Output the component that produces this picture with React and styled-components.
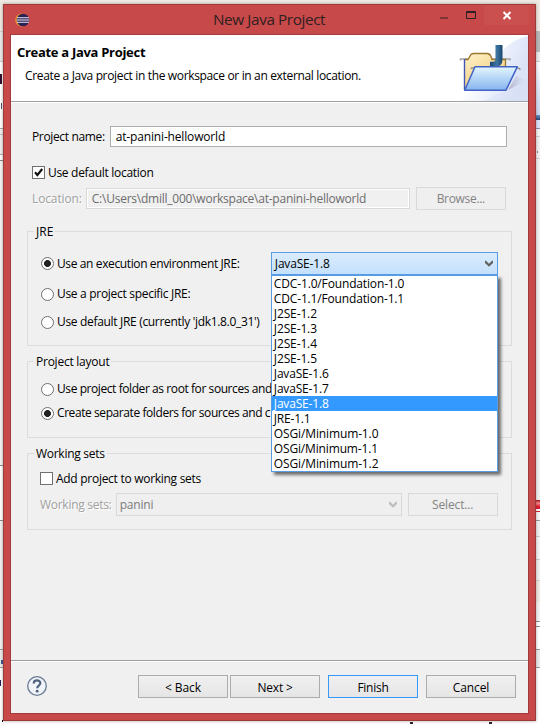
import React from 'react';
import styled, { createGlobalStyle, css } from 'styled-components';

const Global = createGlobalStyle`
  *, *::before, *::after { box-sizing: border-box; }
  body { margin: 0; overflow: hidden; }
`;

const Desktop = styled.div`
  position: relative;
  width: 540px;
  height: 724px;
  overflow: hidden;
  display: flex;
  background: #f5f4f4;
  font: 12px/16px 'Open Sans', 'Noto Sans', sans-serif;
  color: #000;
`;

/* Windows that lie behind the dialog; only their edges stay visible */
const Behind = styled.div`
  position: absolute;
  inset: 0;
  display: flex;
  justify-content: space-between;
`;
const Strip = styled.div`
  width: 270px;
  display: flex;
  flex-direction: column;
`;
const Segment = styled.div`
  flex: none;
  height: ${(p) => p.$h}px;
  background: ${(p) => p.$bg};
  border-top: ${(p) => (p.$line ? `1px solid ${p.$line}` : '0')};
  overflow: hidden;
`;
const Scrap = styled.div`
  width: ${(p) => p.$w || 3}px;
  height: ${(p) => p.$h}px;
  margin: ${(p) => p.$m};
  background: ${(p) => p.$c};
`;

const Window = styled.section`
  position: relative;
  width: 533px;
  height: 717px;
  margin: 4px 0 0 3px;
  padding: 0 6px 6px;
  background: #c84949;
  border: 1px solid #9e3a3a;
  box-shadow: 0 0 3px rgba(70, 50, 50, 0.45);
`;
const TitleBar = styled.header`
  height: 29px;
  display: flex;
  align-items: flex-start;
`;
const EclipseIcon = styled.svg`
  margin: 8px 0 0 5px;
`;
const Title = styled.h1`
  flex: 1;
  margin: 3px 0 0 183px;
  font-size: 15.3px;
  font-weight: 400;
  line-height: 23px;
  letter-spacing: -0.4px;
  color: #2e2022;
  white-space: nowrap;
`;
const Caption = styled.div`
  display: flex;
  height: 20px;
`;
const CaptionButton = styled.div`
  width: ${(p) => p.$w}px;
  background: ${(p) => p.$bg || 'transparent'};
  svg { display: block; }
`;

const Client = styled.div`
  width: 519px;
  height: 680px;
  border: 1px solid #a33a3c;
  background: #f0f0f0;
  display: flex;
  flex-direction: column;
`;
const Banner = styled.div`
  flex: none;
  height: 67px;
  display: flex;
  justify-content: space-between;
  background: #fff;
  border-bottom: 1px solid #a0a0a0;
`;
const BannerText = styled.div`
  padding: 8px 0 0 6px;
`;
const Heading = styled.h2`
  margin: 0;
  font-size: 13px;
  line-height: 18px;
  letter-spacing: -0.3px;
`;
const Text = styled.span`
  display: block;
  white-space: nowrap;
  letter-spacing: ${(p) => p.$ls || 0}px;
  ${(p) => p.$disabled && css`
    color: #a0a0a0;
    text-shadow: 1px 1px 0 #fff;
  `}
`;
const Description = styled(Text)`
  margin: 7px 0 0 8px;
`;

const Body = styled.main`
  flex: 1;
  display: flex;
  flex-direction: column;
  border-top: 1px solid #fff;
  padding: 23px 16px 0;
`;
const Row = styled.div`
  display: flex;
  align-items: center;
  flex: none;
  height: ${(p) => p.$h}px;
  margin-top: ${(p) => p.$mt || 0}px;
  padding-left: ${(p) => p.$pl || 0}px;
`;
const Field = styled.div`
  flex: none;
  width: ${(p) => p.$w}px;
  height: 21px;
  margin-left: ${(p) => p.$ml}px;
  padding: 2px 5px 0;
  border: 1px solid ${(p) => (p.$disabled ? '#d9d9d9' : '#abadb3')};
  background: ${(p) => (p.$disabled ? '#f0f0f0' : '#fff')};
  box-shadow: ${(p) => (p.$disabled ? 'inset 0 0 0 1px #fff' : 'none')};
  color: ${(p) => (p.$disabled ? '#6d6d6d' : '#000')};
`;
const Button = styled.button`
  flex: none;
  width: 90px;
  height: 23px;
  margin: 0 0 0 ${(p) => p.$ml || 0}px;
  padding: 2px 0 0;
  display: flex;
  align-items: center;
  justify-content: center;
  font: inherit;
  color: #000;
  border: 1px solid #acacac;
  background: linear-gradient(#f0f0f0, #e5e5e5);
  ${(p) => p.$primary && css`border-color: #3399ff;`}
  ${(p) => p.$disabled && css`
    padding-top: 0;
    color: #838383;
    border-color: #d9d9d9;
    background: #efefef;
  `}
`;
const Check = styled.span`
  flex: none;
  width: 13px;
  height: 13px;
  margin-right: 3px;
  border: 1px solid #707070;
  background: #fff;
  svg { display: block; }
`;
const Radio = styled.span`
  flex: none;
  width: 13px;
  height: 13px;
  margin-right: 3px;
  border: 1px solid #707070;
  border-radius: 50%;
  background: ${(p) => (p.$on ? 'radial-gradient(circle, #212121 3.1px, #fff 3.8px)' : '#fff')};
`;

const Group = styled.fieldset`
  flex: none;
  position: relative;
  width: 485px;
  height: ${(p) => p.$h}px;
  margin: ${(p) => p.$mt}px 0 0;
  padding: 0;
  border: 1px solid #dcdcdc;
  min-width: 0;
  display: flex;
  flex-direction: column;
`;
const Legend = styled.div`
  flex: none;
  align-self: flex-start;
  height: 16px;
  margin: -8px 0 -1px 6px;
  padding: 0 2px;
  background: #f0f0f0;
`;

const ComboBox = styled.div`
  flex: none;
  position: relative;
  width: ${(p) => p.$w}px;
  height: 23px;
  margin-left: ${(p) => p.$ml}px;
  padding: 0 4px 0 3px;
  display: flex;
  align-items: center;
  justify-content: space-between;
  border: 1px solid ${(p) => (p.$disabled ? '#d9d9d9' : '#569de5')};
  background: ${(p) => (p.$disabled ? '#efefef' : 'linear-gradient(#daecfc, #c4e0fc)')};
  color: ${(p) => (p.$disabled ? '#7b7b7b' : '#000')};
`;
const Menu = styled.ul`
  position: absolute;
  z-index: 2;
  top: 22px;
  left: -1px;
  width: 227px;
  margin: 0;
  padding: 0;
  list-style: none;
  border: 1px solid #569de5;
  background: #fff;
  box-shadow: 3px 3px 3px rgba(0, 0, 0, 0.55);
`;
const Option = styled.li`
  height: 15px;
  padding-left: 2px;
  line-height: 15px;
  background: ${(p) => (p.$active ? '#3399ff' : 'transparent')};
  color: ${(p) => (p.$active ? '#fff' : '#000')};
`;

const Footer = styled.footer`
  flex: none;
  height: 53px;
  display: flex;
  align-items: flex-start;
  padding: 14px 12px 0 15px;
  border-top: 1px solid #a0a0a0;
  box-shadow: inset 0 1px 0 #fff;
`;
const Help = styled.svg`
  flex: none;
  margin-right: 90px;
`;

const runtimes = [
  ['CDC-1.0/Foundation-1.0', -0.15], ['CDC-1.1/Foundation-1.1', -0.16],
  ['J2SE-1.2', -0.13], ['J2SE-1.3', -0.13], ['J2SE-1.4', -0.13], ['J2SE-1.5', -0.13],
  ['JavaSE-1.6', -0.18], ['JavaSE-1.7', -0.18], ['JavaSE-1.8', -0.18], ['JRE-1.1', -0.2],
  ['OSGi/Minimum-1.0', -0.13], ['OSGi/Minimum-1.1', -0.16], ['OSGi/Minimum-1.2', -0.13],
];

const Chevron = ({ color }) => (
  <svg width="8" height="7" viewBox="0 0 8 7">
    <path d="M0 0.8 V3 L4 6.8 L8 3 V0.8 H7 L4 3.7 L1 0.8 Z" fill={color} />
  </svg>
);

const Choice = ({ on, ls, children, ...row }) => (
  <Row $h={16} $pl={13} {...row}>
    <Radio $on={on} />
    <Text $ls={ls}>{children}</Text>
  </Row>
);

const FolderArt = () => (
  <svg width="78" height="66" viewBox="450 35 78 66">
    <defs>
      <linearGradient id="sky" x1="0" y1="0" x2="1" y2="0.3">
        <stop offset="0.3" stopColor="#fff" />
        <stop offset="1" stopColor="#dbe3f7" />
      </linearGradient>
      <linearGradient id="manila" x1="0" y1="0" x2="0.6" y2="1">
        <stop offset="0" stopColor="#fff3cb" />
        <stop offset="1" stopColor="#efc873" />
      </linearGradient>
      <linearGradient id="flap" x1="0" y1="0" x2="0" y2="1">
        <stop offset="0" stopColor="#e3f6ff" />
        <stop offset="1" stopColor="#86b4ee" />
      </linearGradient>
      <linearGradient id="jay" x1="0" y1="0" x2="1" y2="0">
        <stop offset="0" stopColor="#19466f" />
        <stop offset="0.55" stopColor="#3f77a2" />
        <stop offset="1" stopColor="#17446d" />
      </linearGradient>
      <linearGradient id="shade" x1="0" y1="0" x2="1" y2="0">
        <stop offset="0" stopColor="#9a98b4" stopOpacity="0.7" />
        <stop offset="1" stopColor="#c3c5dd" stopOpacity="0" />
      </linearGradient>
    </defs>
    <path d="M528 36 C512 40 504 47 499 57 L488 82 L456 101 H528 Z" fill="url(#sky)" />
    <path d="M528 78 C514 88 502 91 484 101 H528 Z" fill="#cfd9f5" opacity="0.3" />
    <path d="M508 90 L516 76 L526 80 Q516 86 508 90 Z" fill="url(#shade)" />
    <path d="M460.5 60.5 V59 H510 V60.5" fill="none" stroke="#a5a5a5" strokeWidth="1.6" />
    <path d="M465 90 V60 L468 59 L471 54 Q472 53 474 53 H487 Q490 53 491 56 L492 59 H505 V70 L500 90 Z" fill="url(#manila)" />
    <path d="M465 59.5 H468 L471 54.5 Q472 53.5 474 53.5 H487 Q490 53.5 491 56.5 L492 59.5 H505.5 V66" fill="none" stroke="#9a792f" strokeWidth="1.3" />
    <path d="M464.5 90 V59" fill="none" stroke="#4257b8" strokeWidth="1.4" />
    <path d="M495.5 45 H502.5 V59 Q502.5 67 495 67 H490 V61.8 H493 Q495.5 61.8 495.5 59 Z" fill="url(#jay)" />
    <path d="M471 69 Q471 67.8 474 67.8 M515 67.8 Q520 67.5 520 70" fill="none" stroke="#999" strokeWidth="1.7" />
    <path d="M464.7 90.2 L475 66.8 H517.3 L506 90.2 Z" fill="url(#flap)" stroke="#4263c4" strokeWidth="1.5" strokeLinejoin="round" />
  </svg>
);

const Scene = () => (
  <Behind>
    <Strip>
      <Segment $h={31} $bg="#eee9e2" />
      <Segment $h={30} $bg="#e9e9ea" $line="#cfcfcf" />
      <Segment $h={67} $bg="#fff" $line="#ccc">
        <Scrap $h={10} $w={2} $m="12px 0 0 0" $c="#30102e" />
        <Scrap $h={6} $w={1} $m="19px 0 0 1px" $c="#4b4b66" />
      </Segment>
      <Segment $h={6} $bg="#f0f0f0" $line="#aaa" />
      <Segment $h={20} $bg="#f0f0f0" $line="#c0c0c0" />
      <Segment $h={6} $bg="#fff" $line="#aaa" />
      <Segment $h={305} $bg="#f4f4f4" $line="#888" />
      <Segment $h={55} $bg="#fff" $line="#8d8d8d" />
      <Segment $h={129} $bg="#f1f1f1" $line="#8d8d8d" />
      <Segment $h={18} $bg="#ececec" $line="#999">
        <Scrap $h={4} $w={2} $m="10px 0 0 1px" $c="#315a8c" />
      </Segment>
      <Segment $h={57} $bg="#fff" $line="#999">
        <Scrap $h={6} $w={1} $m="12px 0 0 0" $c="#22185c" />
        <Scrap $h={2} $w={1} $m="34px 0 0 2px" $c="#000" />
      </Segment>
    </Strip>
    <Strip>
      <Segment $h={31} $bg="#eee9e2" />
      <Segment $h={21} $bg="#b9b9b9" />
      <Segment $h={9} $bg="#ececec" />
      <Segment $h={54} $bg="linear-gradient(#fff, #e9eefa 35%, #c9d7ef)" $line="#ccc" />
      <Segment $h={5} $bg="linear-gradient(#6d94c0, #1f4478)" />
      <Segment $h={8} $bg="#dbe3f8" />
      <Segment $h={8} $bg="#f4f4f4" $line="#8f8fa8" />
      <Segment $h={22} $bg="#f0f0f0" $line="#d0d0d0">
        <Scrap $h={2} $w={1} $m="14px 0 0 267px" $c="#987" />
      </Segment>
      <Segment $h={342} $bg="#f2f2f2" $line="#d0d0d0" />
      <Segment $h={11} $bg="linear-gradient(#d2434a, #f58287 25%, #e31b2c 55%, #dc1830 80%, #fff 85%)" $line="#a22" />
      <Segment $h={9} $bg="#f7f7f7" $line="#c23" />
      <Segment $h={16} $bg="#f0f0f0" $line="#999" />
      <Segment $h={23} $bg="#f4f4f4" $line="#ccc" />
      <Segment $h={21} $bg="#f0f0f0" $line="#ccc" />
      <Segment $h={22} $bg="#eee9e2" $line="#d0d0d0" />
      <Segment $h={19} $bg="#f3f3f3" />
      <Segment $h={5} $bg="#fff" $line="#8a8a8a" />
      <Segment $h={23} $bg="#fff" $line="#8a8a8a" />
      <Segment $h={18} $bg="#ececec" $line="#999" />
      <Segment $h={57} $bg="#fff" $line="#999">
        <Scrap $h={2} $w={3} $m="54px 0 0 140px" $c="#222" />
        <Scrap $h={2} $w={3} $m="-2px 0 0 219px" $c="#222" />
      </Segment>
    </Strip>
  </Behind>
);

export default function App() {
  return (
    <Desktop>
      <Global />
      <Scene />
      <Window>
        <TitleBar>
          <EclipseIcon width="15" height="14" viewBox="0 0 15 14">
            <circle cx="6.8" cy="7" r="6.5" fill="#f09a2a" />
            <circle cx="8" cy="7" r="6.3" fill="#2c2255" />
            <path d="M2 4.7H14 M1.7 7H14.3 M2 9.3H14" stroke="#e9e9f4" strokeWidth="1.1" />
          </EclipseIcon>
          <Title>New Java Project</Title>
          <Caption>
            <CaptionButton $w={30}>
              <svg width="30" height="20"><path d="M6 13H14" stroke="#6c3034" strokeWidth="1.6" /></svg>
            </CaptionButton>
            <CaptionButton $w={20}>
              <svg width="20" height="20"><path d="M2.5 6.5H11.5V13.5H2.5Z M2 7.5H12" fill="none" stroke="#2e2022" /></svg>
            </CaptionButton>
            <CaptionButton $w={45} $bg="#c9504f">
              <svg width="45" height="20"><path d="M19.5 7L26.5 14M26.5 7L19.5 14" stroke="#fff" strokeWidth="2" /></svg>
            </CaptionButton>
          </Caption>
        </TitleBar>

        <Client>
          <Banner>
            <BannerText>
              <Heading>Create a Java Project</Heading>
              <Description $ls={-0.345}>
                Create a Java project in the workspace or in an external location.
              </Description>
            </BannerText>
            <FolderArt />
          </Banner>

          <Body>
            <Row $h={21} $pl={5}>
              <Text $ls={-0.35}>Project name:</Text>
              <Field $w={397} $ml={5}><Text $ls={-0.16}>at-panini-helloworld</Text></Field>
            </Row>
            <Row $h={13} $mt={19} $pl={5}>
              <Check>
                <svg width="11" height="11" viewBox="0 0 11 11">
                  <path d="M2 5.2L4.4 8L9.2 2" fill="none" stroke="#111" strokeWidth="2.1" />
                </svg>
              </Check>
              <Text $ls={-0.3}>Use default location</Text>
            </Row>
            <Row $h={23} $mt={8} $pl={5}>
              <Text $ls={-0.13} $disabled>Location:</Text>
              <Field $w={324} $ml={4} $disabled>
                <Text $ls={-0.24}>C:\Users\dmill_000\workspace\at-panini-helloworld</Text>
              </Field>
              <Button $ml={6} $disabled><Text $ls={-0.32}>Browse...</Text></Button>
            </Row>

            <Group $h={115} $mt={21}>
              <Legend><Text>JRE</Text></Legend>
              <Row $h={23} $mt={13} $pl={13}>
                <Radio $on />
                <Text $ls={-0.38}>Use an execution environment JRE:</Text>
                <ComboBox $w={227} $ml={31.4}>
                  <Text $ls={-0.18}>JavaSE-1.8</Text>
                  <Chevron color="#606060" />
                  <Menu>
                    {runtimes.map(([name, ls]) => (
                      <Option key={name} $active={name === 'JavaSE-1.8'}>
                        <Text as="span" $ls={ls}>{name}</Text>
                      </Option>
                    ))}
                  </Menu>
                </ComboBox>
              </Row>
              <Choice $mt={11} ls={-0.3}>Use a project specific JRE:</Choice>
              <Choice $mt={12} ls={-0.32}>Use default JRE (currently 'jdk1.8.0_31')</Choice>
            </Group>

            <Group $h={77} $mt={15}>
              <Legend><Text $ls={-0.24}>Project layout</Text></Legend>
              <Choice $mt={12} ls={-0.42}>Use project folder as root for sources and</Choice>
              <Choice $mt={8} ls={-0.42} on>Create separate folders for sources and c</Choice>
            </Group>

            <Group $h={77} $mt={15}>
              <Legend><Text $ls={-0.28}>Working sets</Text></Legend>
              <Row $h={13} $mt={11} $pl={12}>
                <Check />
                <Text $ls={-0.28}>Add project to working sets</Text>
              </Row>
              <Row $h={23} $mt={8} $pl={12}>
                <Text $ls={-0.28} $disabled>Working sets:</Text>
                <ComboBox $w={286} $ml={4.2} $disabled>
                  <Text $ls={-0.2}>panini</Text>
                  <Chevron color="#bcbcbc" />
                </ComboBox>
                <Button $ml={6} $disabled><Text $ls={-0.16}>Select...</Text></Button>
              </Row>
            </Group>
          </Body>

          <Footer>
            <Help width="22" height="22" viewBox="0 0 22 22">
              <circle cx="11" cy="11" r="9.3" fill="#f0f3f7" stroke="#6b7b94" strokeWidth="1.3" />
              <path d="M7.7 8.6 C7.7 4.3 14.4 4.4 14.3 8.3 C14.2 10.6 11.2 10.8 11.2 13.2" fill="none" stroke="#50627f" strokeWidth="2.2" />
              <circle cx="11.2" cy="16.2" r="1.4" fill="#50627f" />
            </Help>
            <Button $ml={0}><Text $ls={-0.05}>&lt; Back</Text></Button>
            <Button $ml={2}><Text $ls={-0.2}>Next &gt;</Text></Button>
            <Button $ml={8} $primary><Text $ls={-0.25}>Finish</Text></Button>
            <Button $ml={8}><Text $ls={-0.1}>Cancel</Text></Button>
          </Footer>
        </Client>
      </Window>
    </Desktop>
  );
}
